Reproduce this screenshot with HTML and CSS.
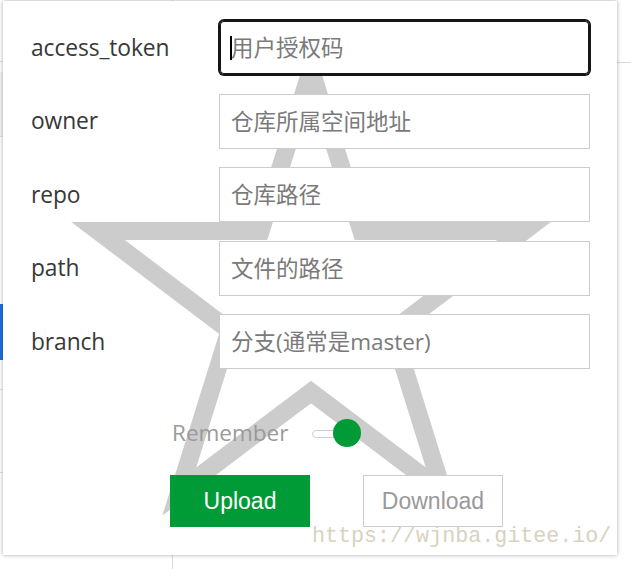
FILE: index.html
```html
<!DOCTYPE html>
<html lang="zh">
<head>
<meta charset="utf-8">
<title>Gitee</title>
<link rel="stylesheet" href="styles.css">
</head>
<body>
<div class="page">
  <aside class="side">
    <div class="side-top"></div>
    <div class="side-block"></div>
    <div class="side-gap"></div>
    <div class="side-active"></div>
    <div class="side-row"></div>
    <div class="side-row"></div>
  </aside>
  <main class="main">
    <div class="main-head"></div>
  </main>
</div>

<section class="panel">
  <svg class="star" viewBox="3 1 614 554" width="614" height="554" aria-hidden="true">
    <polygon points="311,70 361.3,231 524,231 392.4,330.5 442.7,491.5 311,392 179.3,491.5 229.6,330.5 98,231 260.7,231" fill="none" stroke="#cccccc" stroke-width="18" stroke-linejoin="miter" stroke-miterlimit="10"/>
  </svg>
  <form class="form">
    <label class="label" for="f1">access_token</label>
    <div class="field">
      <input class="input focused" id="f1" type="text" placeholder="用户授权码">
      <span class="caret"></span>
    </div>
    <label class="label" for="f2">owner</label>
    <input class="input" id="f2" type="text" placeholder="仓库所属空间地址">
    <label class="label" for="f3">repo</label>
    <input class="input" id="f3" type="text" placeholder="仓库路径">
    <label class="label" for="f4">path</label>
    <input class="input" id="f4" type="text" placeholder="文件的路径">
    <label class="label" for="f5">branch</label>
    <input class="input" id="f5" type="text" placeholder="分支(通常是master)">
  </form>
  <div class="remember">
    <span class="remember-text">Remember</span>
    <span class="toggle"><span class="track"></span><span class="knob"></span></span>
  </div>
  <div class="buttons">
    <button class="btn btn-upload" type="button">Upload</button>
    <button class="btn btn-download" type="button">Download</button>
  </div>
</section>

<div class="watermark">https://wjnba.gitee.io/</div>
</body>
</html>
```

FILE: styles.css
```css
html, body {
  margin: 0;
  padding: 0;
  background: #ffffff;
  width: 631px;
  height: 569px;
  overflow: hidden;
  position: relative;
}

.page {
  display: flex;
  height: 569px;
}

.side {
  width: 172px;
  border-right: 1px solid #dcdcdc;
  display: flex;
  flex-direction: column;
}

.side-top {
  height: 61px;
  border-bottom: 1px solid #e2e2e2;
}

.side-block {
  margin-top: 10px;
  height: 64px;
  background: #f3f3f3;
  border-bottom: 1px solid #e0e0e0;
}

.side-gap {
  height: 167px;
}

.side-active {
  height: 56px;
  background: #1f6fe0;
}

.side-row {
  height: 29px;
  border-bottom: 1px solid #e6e6e6;
}

.side-row + .side-row {
  height: 82px;
}

.main {
  flex: 1;
}

.main-head {
  height: 62px;
  border-bottom: 1px solid #d9d9d9;
}

.panel {
  position: absolute;
  left: 3px;
  top: 1px;
  width: 614px;
  height: 554px;
  background: #ffffff;
  box-shadow: 0 0 4px rgba(0, 0, 0, 0.35);
  box-sizing: border-box;
  padding: 19px 27px 0 28px;
}

.star {
  position: absolute;
  left: 0;
  top: 0;
  z-index: 0;
}

.form {
  position: relative;
  z-index: 1;
  display: grid;
  grid-template-columns: 188px 371px;
  grid-auto-rows: 55px;
  row-gap: 18.5px;
  align-items: center;
  margin: 0;
}

.label {
  font-family: "Open Sans", "Noto Sans CJK SC", sans-serif;
  font-size: 22.8px;
  color: #383838;
  line-height: 30px;
  letter-spacing: -0.1px;
}

.field {
  position: relative;
  height: 55px;
}

.input {
  box-sizing: border-box;
  width: 371px;
  height: 55px;
  margin: 0;
  padding: 0 11px;
  border: 1px solid #cccccc;
  border-radius: 0;
  background: #ffffff;
  font-family: "Open Sans", "Noto Sans CJK SC", sans-serif;
  font-size: 22.5px;
  color: #333333;
  outline: none;
}

.input::placeholder {
  color: #7a7a7a;
}

.input.focused {
  border: 1px solid #161616;
  border-radius: 5px;
  box-shadow: 0 0 0 1px #161616, inset 0 0 0 1px #161616;
}

.caret {
  position: absolute;
  left: 11px;
  top: 16px;
  width: 2px;
  height: 24px;
  background: #000000;
}

.remember {
  position: relative;
  z-index: 1;
  display: flex;
  align-items: center;
  height: 30px;
  margin-top: 49px;
  padding-left: 141px;
}

.remember-text {
  font-family: "Open Sans", sans-serif;
  font-size: 22.5px;
  color: #9a9a9a;
  line-height: 30px;
}

.toggle {
  position: relative;
  display: block;
  width: 50px;
  height: 30px;
  margin-left: 24px;
}

.track {
  position: absolute;
  left: 0;
  top: 12px;
  width: 40px;
  height: 6px;
  border: 1px solid #cfcfcf;
  border-radius: 4px;
  background: #ffffff;
}

.knob {
  position: absolute;
  left: 21px;
  top: 1px;
  width: 28px;
  height: 28px;
  border-radius: 50%;
  background: #009a36;
}

.buttons {
  position: relative;
  z-index: 1;
  display: flex;
  gap: 53px;
  margin-top: 27px;
  padding-left: 139px;
}

.btn {
  width: 140px;
  height: 52px;
  margin: 0;
  padding: 0;
  font-family: "Liberation Sans", Arial, sans-serif;
  font-size: 23px;
  cursor: pointer;
}

.btn-upload {
  background: #009a36;
  color: #ffffff;
  border: none;
}

.btn-download {
  background: #ffffff;
  color: #999999;
  border: 1px solid #cccccc;
}

.watermark {
  position: absolute;
  left: 312px;
  top: 522px;
  z-index: 2;
  font-family: "Liberation Mono", monospace;
  font-size: 21.7px;
  line-height: 30px;
  color: #d7d3c0;
  white-space: nowrap;
}
```
